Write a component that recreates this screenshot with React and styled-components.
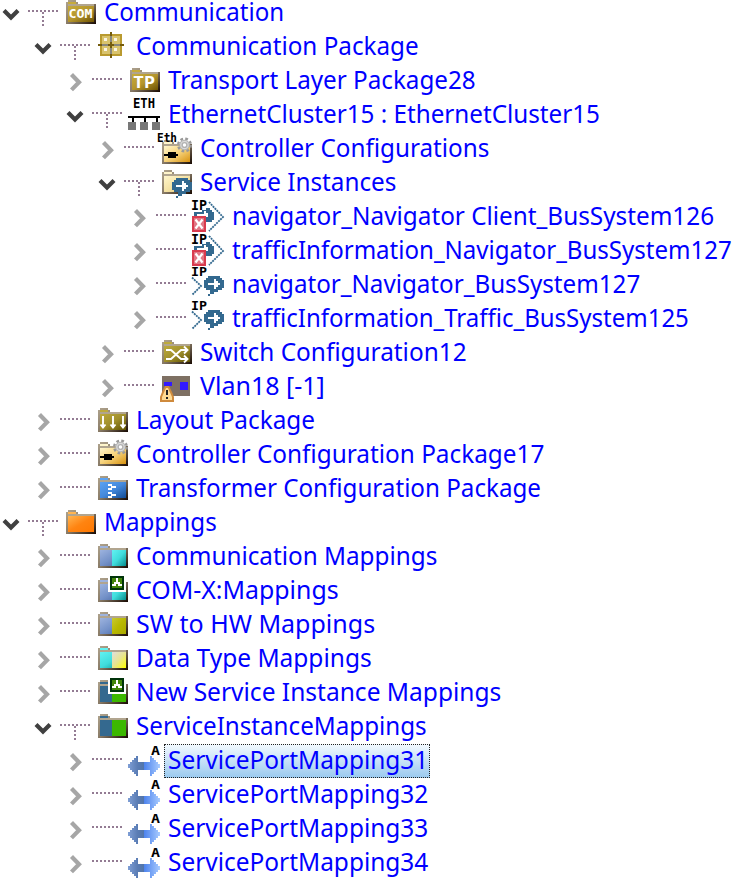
import React from "react";
import styled, { createGlobalStyle, css } from "styled-components";

const Global = createGlobalStyle`
  body { margin: 0; background: #fff; overflow: hidden; }
`;

const Tree = styled.div`
  width: 734px;
  height: 878px;
  overflow: hidden;
  background: #fff;
`;

const Rows = styled.div`
  display: flex;
  flex-direction: column;
  margin-top: -4px;
`;

const Row = styled.div`
  display: flex;
  height: 34px;
  flex: none;
  padding-left: ${(p) => p.$level * 32}px;
`;

const Chevron = styled.svg`
  width: 28px;
  height: 34px;
  flex: none;
  fill: none;
  stroke-width: 4.2;
`;

const Connector = styled.svg`
  width: 36px;
  height: 34px;
  flex: none;
`;

const Icon = styled.svg`
  width: 32px;
  height: 32px;
  flex: none;
  margin-right: 4px;
  overflow: visible;
  text { font-family: "DejaVu Sans Mono", monospace; font-weight: bold; }
`;

const Label = styled.div`
  box-sizing: border-box;
  height: 34px;
  width: ${(p) => p.$width}px;
  padding: 4px 0 0 4px;
  font: 25px/22px "Noto Sans", sans-serif;
  color: #0000ff;
  white-space: nowrap;
  ${(p) => p.$selected && css`
    background: linear-gradient(#f4faff, #99c9ef);
    outline: 1px dotted #222;
    outline-offset: -1px;
  `}
`;

const LabelText = styled.span`
  display: block;
  width: max-content;
  transform-origin: 0 50%;
`;

function FitLabel({ text, width, selected }) {
  const ref = React.useRef(null);
  React.useLayoutEffect(() => {
    const el = ref.current;
    el.style.transform = `scaleX(${width / el.offsetWidth})`;
  }, [text, width]);
  return (
    <Label $selected={selected} $width={width + 6}>
      <LabelText ref={ref}>{text}</LabelText>
    </Label>
  );
}

// Each palette runs from the lit corner through the middle to the shaded corner.
const palettes = {
  olive: ["#c6ab3c", "#b4952c", "#6e5200"],
  lay: ["#bdaa3c", "#a08f2b", "#5f5100"],
  cream: ["#fff6cc", "#f6d27a", "#d8920f"],
  pale: ["#fff5cb", "#f4e2a4", "#e0c36c"],
  blue: ["#5ba2f2", "#4489dc", "#124b94"],
  orange: ["#ffb450", "#ff8411", "#ff7800"],
  steel: ["#9db3de", "#7391c8", "#43619f"],
  cyan: ["#62f2f2", "#3fdcdc", "#078d8d"],
  yellow: ["#c8c830", "#b8b800", "#aaa900"],
  bright: ["#dedede", "#e8e490", "#ffff00"],
  teal: ["#34698f", "#34698f", "#34698f"],
  green: ["#3cb800", "#3cb800", "#3cb800"],
};

const Shade = ({ id, colors }) => (
  <linearGradient id={id} x2="1" y2="1">
    <stop stopColor={colors[0]} />
    <stop offset=".5" stopColor={colors[1]} />
    <stop offset="1" stopColor={colors[2]} />
  </linearGradient>
);

function Folder({ id, left, right }) {
  const a = palettes[left];
  const b = palettes[right || left];
  return (
    <g shapeRendering="crispEdges">
      <defs>
        <Shade id={`${id}a`} colors={a} />
        <Shade id={`${id}b`} colors={b} />
        <Shade id={`${id}f`} colors={["#b1a58f", "#897b67", "#160800"]} />
      </defs>
      <path d="M2 6h2V4h8v2h2v2h18v20H2z" fill={`url(#${id}f)`} />
      <path d="M4 6h8v2H4z" fill={a[0]} />
      <path d="M4 10h26v16H4z" fill={`url(#${id}a)`} />
      {right && <path d="M16 10h14v16H16z" fill={`url(#${id}b)`} />}
      <path d="M4 8h10v2H4zM14 8h16v2H14z" fill="#b1a58f" />
    </g>
  );
}

const Bubble = ({ x, y }) => (
  <g transform={`translate(${x} ${y})`} shapeRendering="crispEdges">
    <path d="M4 0h12v2h2v2h2v8h-2v2h-4v2h-4v2H6v2H4v-2h2v-4H2v-2H0V4h2V2h2z" fill="#33698f" />
    <path d="M4 7h6V3h2v2h2v2h2v2h-2v2h-2v2h-2V9H4z" fill="#fff" />
  </g>
);

const Gear = () => (
  <g>
    <circle cx="24.5" cy="9" r="6.3" fill="none" stroke="#999" strokeWidth="2.4" strokeDasharray="2.7 2.25" />
    <circle cx="24.5" cy="9" r="5.2" fill="#b2b2b2" />
    <circle cx="24.5" cy="9" r="3.7" fill="none" stroke="#dadada" strokeWidth="1.2" />
    <circle cx="24.5" cy="9" r="1.7" fill="#fff" />
  </g>
);

const Plug = () => <path d="M4 18h4v-2h8v2h2v2h-2v2H8v-2H4z" fill="#000" />;

const SvcBadge = () => (
  <g shapeRendering="crispEdges">
    <path d="M12 1h18v17H12z" fill="#fff" />
    <path d="M14 2h14v14H14z" fill="#00330a" />
    <path d="M16 4h10v10H16z" fill="#43860a" />
    <path d="M20 4h2v4h2v2h2v2h-4v-2h-2v2h-4v-2h2V8h2z" fill="#fff" />
  </g>
);

function ServiceIcon({ client }) {
  return client ? (
    <g>
      <path d="M2 12h8v-2h4V8h4v2h2v2h2v8h-2v2h-6V12h-2v4H2z" fill="#33698f" shapeRendering="crispEdges" />
      <path d="M5 14h7v-3h2v2h2v4h-2v3H5z" fill="#fff" />
      <path d="M17 2 31 17 17 31" fill="none" stroke="#33698f" strokeWidth="1.8" strokeDasharray="2 .8" />
      <path d="M0 16h14v16H0z" fill="#d93b4e" shapeRendering="crispEdges" />
      <path d="M2 18h10v12H2z" fill="#e07886" shapeRendering="crispEdges" />
      <path d="M3.5 19.5l7 9M10.5 19.5l-7 9" stroke="#fff" strokeWidth="2.2" />
      <text x="-1" y="10" fontSize="13.5" textLength="16" lengthAdjust="spacingAndGlyphs">IP</text>
    </g>
  ) : (
    <g>
      <path d="M0 9.5 9 18 0 27" fill="none" stroke="#33698f" strokeWidth="1.8" strokeDasharray="2 .8" />
      <Bubble x={12} y={8} />
      <text x="-1" y="8" fontSize="11.5" textLength="16" lengthAdjust="spacingAndGlyphs">IP</text>
    </g>
  );
}

function Glyph({ kind, id }) {
  switch (kind) {
    case "com":
      return <g><Folder id={id} left="olive" /><text x="4.5" y="22" fontSize="11.5" fill="#fff" textLength="24" lengthAdjust="spacingAndGlyphs">COM</text></g>;
    case "tp":
      return <g><Folder id={id} left="olive" /><text x="5" y="24" fontSize="16" fill="#fff" textLength="22" lengthAdjust="spacingAndGlyphs">TP</text></g>;
    case "package":
      return (
        <g shapeRendering="crispEdges">
          <path d="M4 4h22v22H4z" fill="#b99a2f" />
          <path d="M6 6h18v18H6z" fill="#d9c36c" />
          <path d="M8 8h3v3H8zM18 8h3v3h-3zM8 18h3v3H8zM18 18h3v3h-3z" fill="#fbf5e4" />
          <path d="M14 2h2v26h-2zM2 14h26v2H2z" fill="#755c0d" />
          <path d="M14 6h2v6h-2zM14 18h2v6h-2zM6 14h6v2H6zM18 14h6v2h-6z" fill="#88867c" />
        </g>
      );
    case "eth":
      return (
        <g>
          <path d="M0 18h32v2H0zM4 20h2v4H4zM16 20h2v4h-2zM28 20h2v4h-2z" fill="#000" />
          <path d="M0 24h8v8H0zM12 24h8v8h-8zM24 24h8v8h-8z" fill="#787878" />
          <text x="5" y="10" fontSize="13.5" textLength="22" lengthAdjust="spacingAndGlyphs">ETH</text>
        </g>
      );
    case "ethctl":
      return (
        <g>
          <g transform="translate(0 4)"><Folder id={id} left="cream" /><Plug /><Gear /></g>
          <text x="-3" y="9.5" fontSize="12.5" textLength="20" lengthAdjust="spacingAndGlyphs">Eth</text>
        </g>
      );
    case "ctl":
      return <g><Folder id={id} left="cream" /><Plug /><Gear /></g>;
    case "svcfolder":
      return <g><Folder id={id} left="pale" /><Bubble x={12} y={12} /></g>;
    case "client":
      return <ServiceIcon client />;
    case "server":
      return <ServiceIcon />;
    case "switch":
      return (
        <g>
          <Folder id={id} left="lay" />
          <path d="M6 14h5l10 9h6M6 23h5l10-9h6M24 10.5l3.5 3.5-3.5 3.5M24 19.5l3.5 3.5-3.5 3.5" fill="none" stroke="#fff" strokeWidth="1.9" />
        </g>
      );
    case "vlan":
      return (
        <g>
          <path d="M2 6h28v20H2z" fill="#7e7063" />
          <path d="M4 12h8v4H4zM20 12h8v8h-8z" fill="#3219ff" />
          <path d="M5 16h4l3 6 2 5v5H0v-5l2-5z" fill="#cf8a3c" />
          <path d="M6 18h2l4 9v3H2v-3z" fill="#ffdb93" />
          <path d="M6 20h2v5H6zM6 27h2v2H6z" fill="#222" />
        </g>
      );
    case "layout":
      return <g><Folder id={id} left="lay" /><path d="M7 12v12M17 12v12M27 12v12M4.5 20.5l2.5 3 2.5-3M14.5 20.5l2.5 3 2.5-3M24.5 20.5l2.5 3 2.5-3" fill="none" stroke="#fff" strokeWidth="1.9" /></g>;
    case "transform":
      return <g><Folder id={id} left="blue" /><path d="M12 12h4v2h4v2h-4v2h-4v-2h3v-2h-3zM12 20h4v2h4v2h-4v2h-4v-2h3v-2h-3z" fill="#fff" /></g>;
    case "orange":
      return <Folder id={id} left="orange" />;
    case "commap":
      return <Folder id={id} left="steel" right="cyan" />;
    case "comx":
      return <g><Folder id={id} left="steel" right="cyan" /><SvcBadge /></g>;
    case "swhw":
      return <Folder id={id} left="steel" right="yellow" />;
    case "datatype":
      return <Folder id={id} left="cyan" right="bright" />;
    case "newsvc":
      return <g><Folder id={id} left="teal" right="green" /><SvcBadge /></g>;
    case "svcmap":
      return <Folder id={id} left="teal" right="green" />;
    default:
      return (
        <g>
          <defs><linearGradient id={`${id}m`}><stop stopColor="#7f9fd6" /><stop offset=".3" stopColor="#5a7cb4" /><stop offset=".49" stopColor="#5275aa" /><stop offset=".5" stopColor="#4d83ed" /><stop offset="1" stopColor="#a8cbff" /></linearGradient></defs>
          <path d="M0 20h2v-2h2v-2h2v-2h2v-2h2v6h12v-6h2v2h2v2h2v2h2v2h2v4h-2v2h-2v2h-2v2h-2v2h-2v-6H10v6H8v-2H6v-2H4v-2H2v-2H0z" fill={`url(#${id}m)`} shapeRendering="crispEdges" />
          <text x="23" y="10.5" fontSize="13" textLength="9" lengthAdjust="spacingAndGlyphs">A</text>
        </g>
      );
  }
}

const nodes = [
  [0, true, "com", "Communication", 180],
  [1, true, "package", "Communication Package", 283],
  [2, false, "tp", "Transport Layer Package28", 308],
  [2, true, "eth", "EthernetCluster15 : EthernetCluster15", 432],
  [3, false, "ethctl", "Controller Configurations", 289],
  [3, true, "svcfolder", "Service Instances", 196],
  [4, false, "client", "navigator_Navigator Client_BusSystem126", 482],
  [4, false, "client", "trafficInformation_Navigator_BusSystem127", 500],
  [4, false, "server", "navigator_Navigator_BusSystem127", 408],
  [4, false, "server", "trafficInformation_Traffic_BusSystem125", 457],
  [3, false, "switch", "Switch Configuration12", 267],
  [3, false, "vlan", "Vlan18 [-1]", 125],
  [1, false, "layout", "Layout Package", 179],
  [1, false, "ctl", "Controller Configuration Package17", 408],
  [1, false, "transform", "Transformer Configuration Package", 405],
  [0, true, "orange", "Mappings", 113],
  [1, false, "commap", "Communication Mappings", 301],
  [1, false, "comx", "COM-X:Mappings", 203],
  [1, false, "swhw", "SW to HW Mappings", 239],
  [1, false, "datatype", "Data Type Mappings", 236],
  [1, false, "newsvc", "New Service Instance Mappings", 365],
  [1, true, "svcmap", "ServiceInstanceMappings", 291],
  [2, false, "map", "ServicePortMapping31", 260],
  [2, false, "map", "ServicePortMapping32", 260],
  [2, false, "map", "ServicePortMapping33", 260],
  [2, false, "map", "ServicePortMapping34", 260],
];

export default function App() {
  return (
    <Tree>
      <Global />
      <Rows>
        {nodes.map(([level, open, kind, text, width], i) => (
          <Row key={text} $level={level}>
            <Chevron viewBox="0 0 28 34">
              {open ? <path d="M4 14.5l7 7 7-7" stroke="#404040" /> : <path d="M7.5 10.5l7.5 7.7-7.5 7.7" stroke="#a6a6a6" />}
            </Chevron>
            <Connector viewBox="0 0 36 34" shapeRendering="crispEdges">
              <path d="M0 15h32" stroke="#937b93" strokeWidth="2" strokeDasharray="2 2" />
              {open && <path d="M15 16v14" stroke="#937b93" strokeWidth="2" strokeDasharray="2 2" />}
            </Connector>
            <Icon viewBox="0 0 32 32">
              <Glyph kind={kind} id={`n${i}`} />
            </Icon>
            <FitLabel text={text} width={width} selected={text.endsWith("Mapping31")} />
          </Row>
        ))}
      </Rows>
    </Tree>
  );
}
